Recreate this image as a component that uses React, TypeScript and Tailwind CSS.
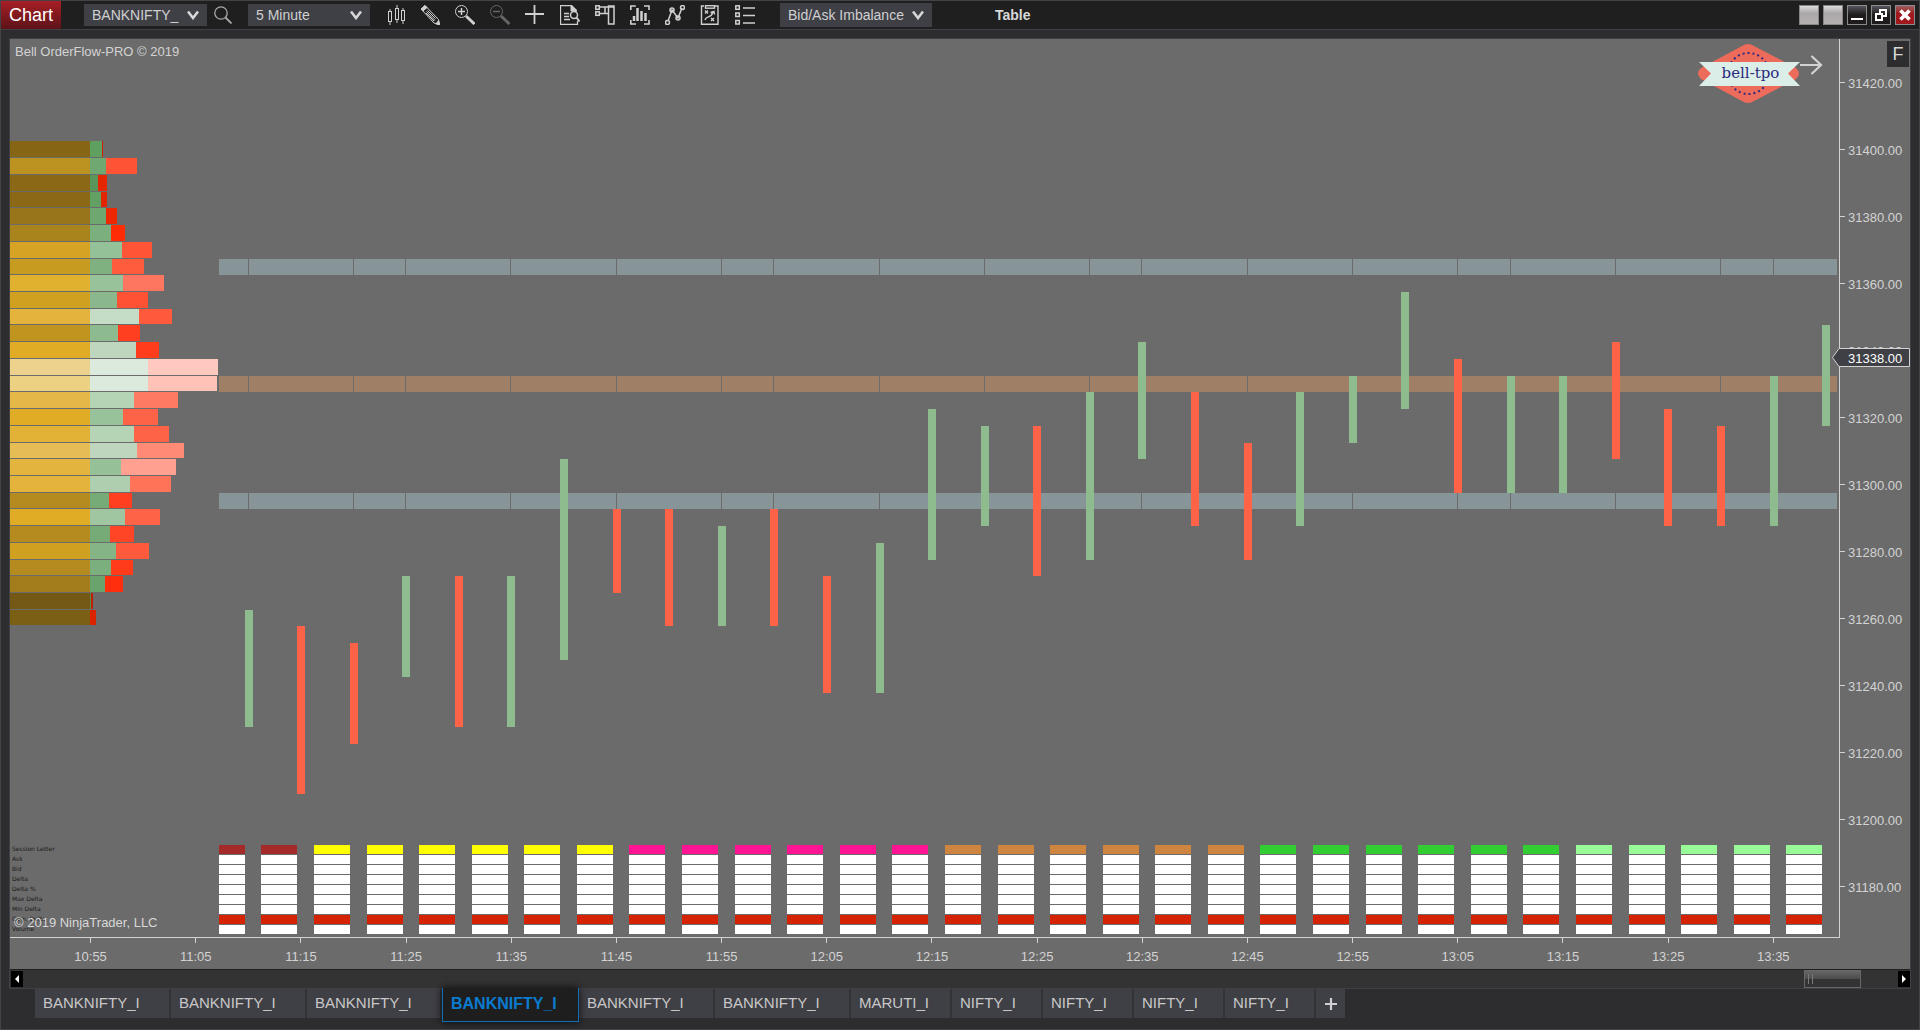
import type { ReactNode } from "react";

/* ---------- data ---------- */

// Volume profile: [volume colour, bid colour, bid end x, ask colour, ask end x]
const PROFILE: [string, string, number, string, number][] = [
  ["#866514", "#5fa061", 102, "#d51f00", 103],
  ["#bc9221", "#6fa870", 106, "#ff5336", 137],
  ["#8a6816", "#5a955c", 98, "#e62600", 107],
  ["#8a6816", "#62a163", 101, "#e22400", 107],
  ["#98751a", "#6ea770", 106, "#ee2800", 117],
  ["#a9831c", "#7bb07e", 111, "#ff2c06", 125],
  ["#d6a324", "#95c199", 122, "#ff5536", 152],
  ["#c79a20", "#7eb17f", 112, "#ff5c3e", 144],
  ["#e0b02f", "#98c299", 123, "#ff7660", 164],
  ["#d0a020", "#8ab88c", 117, "#ff5234", 148],
  ["#e3b33b", "#c5dcc6", 139, "#ff5a3c", 172],
  ["#c1931f", "#8dbb8f", 118, "#ff3f20", 140],
  ["#e0ac25", "#bed6be", 136, "#ff3d1c", 159],
  ["#ecd28c", "#dceadd", 148, "#ffc9c0", 218],
  ["#ecd182", "#dceadd", 148, "#ffc2b6", 217],
  ["#e4b748", "#b5d4b6", 134, "#ff7a63", 178],
  ["#e0ac25", "#98c299", 123, "#ff6347", 158],
  ["#e2b237", "#b5d4b6", 134, "#ff6347", 169],
  ["#e5bd54", "#bed6be", 137, "#ff8a75", 184],
  ["#e3b53f", "#96c098", 121, "#ffa090", 176],
  ["#e3b33b", "#aecfaf", 130, "#ff7358", 171],
  ["#b58b20", "#76aa77", 109, "#ff3f20", 132],
  ["#e0ac25", "#9fc6a0", 125, "#ff6347", 160],
  ["#b58b20", "#76aa77", 110, "#ff4526", 134],
  ["#d0a020", "#85b587", 116, "#ff5a3c", 149],
  ["#b58b20", "#7bb07e", 111, "#ff3b1a", 133],
  ["#a37c1b", "#6aa36b", 105, "#ff2e0c", 123],
  ["#735915", "#4f8d51", 91, "#c41e00", 93],
  ["#7a5f15", "#4f8d51", 90, "#dc2300", 96],
];

// Five-minute bars: [first price level, level after the last, rising]
const BARS: [number, number, boolean][] = [
  [28, 35, true], [29, 39, false], [30, 36, false], [26, 32, true], [26, 35, false],
  [26, 35, true], [19, 31, true], [22, 27, false], [22, 29, false], [23, 29, true],
  [22, 29, false], [26, 33, false], [24, 33, true], [16, 25, true], [17, 23, true],
  [17, 26, false], [15, 25, true], [12, 19, true], [15, 23, false], [18, 25, false],
  [15, 23, true], [14, 18, true], [9, 16, true], [13, 21, false], [14, 21, true],
  [14, 21, true], [12, 19, false], [16, 23, false], [17, 23, false], [14, 23, true],
  [11, 17, true],
];

const BANDS = [
  { level: 7, color: "#879599" },
  { level: 14, color: "#9f8066" },
  { level: 21, color: "#879599" },
];
const BAND_BREAKS = [0, 2, 3, 5, 7, 9, 10, 12, 14, 16, 17, 19, 21, 23, 24, 26, 28, 29];

const SESSION_LABELS = [
  "Session Letter", "Ask", "Bid", "Delta", "Delta %", "Max Delta", "Min Delta", "Cum. Delta", "Volume",
];

const PRICES = Array.from({ length: 13 }, (_, i) => (31420 - i * 20).toFixed(2));
const TIMES = Array.from({ length: 17 }, (_, i) => {
  const m = 655 + i * 10;
  return `${Math.floor(m / 60)}:${String(m % 60).padStart(2, "0")}`;
});

const TABS: [string, string][] = [
  ["BANKNIFTY_I", "w-[136px]"],
  ["BANKNIFTY_I", "w-[136px]"],
  ["BANKNIFTY_I", "w-[135px]"],
  ["BANKNIFTY_I", "w-[137px]"],
  ["BANKNIFTY_I", "w-[136px]"],
  ["BANKNIFTY_I", "w-[136px]"],
  ["MARUTI_I", "w-[101px]"],
  ["NIFTY_I", "w-[91px]"],
  ["NIFTY_I", "w-[91px]"],
  ["NIFTY_I", "w-[91px]"],
  ["NIFTY_I", "w-[91px]"],
];
const ACTIVE_TAB = 3;

/* ---------- chart drawing ---------- */

const levelY = (k: number) => Math.round(141.45 + 16.725 * k);
const barX = (i: number) => Math.round(244.5 + 52.588 * i);
const cellX = (i: number) => Math.round(208.74 + 52.587 * i);

function sessionColor(i: number) {
  if (i < 2) return "#a52a2a";
  if (i < 8) return "#ffff00";
  if (i < 14) return "#ff1493";
  if (i < 20) return "#cd853f";
  if (i < 26) return "#32cd32";
  return "#98fb98";
}

function Plot() {
  return (
    <svg
      className="absolute inset-0 h-full w-full"
      viewBox="10 39 1829 898"
      preserveAspectRatio="none"
      shapeRendering="crispEdges"
      role="img"
      aria-label="Order flow chart"
    >
      {PROFILE.map(([vol, bid, bidEnd, ask, askEnd], k) => {
        const y = levelY(k);
        const h = levelY(k + 1) - y - 1;
        return (
          <g key={k}>
            <rect x={10} y={y} width={80} height={h} fill={vol} />
            <rect x={90} y={y} width={bidEnd - 90} height={h} fill={bid} />
            <rect x={bidEnd} y={y} width={askEnd - bidEnd} height={h} fill={ask} />
          </g>
        );
      })}
      {BANDS.map(({ level, color }) => (
        <g key={level}>
          <rect x={219} y={levelY(level)} width={1618} height={16} fill={color} />
          {BAND_BREAKS.map((i) => (
            <rect key={i} x={barX(i) + 3} y={levelY(level)} width={1} height={16} fill="#6b6b6b" />
          ))}
        </g>
      ))}
      {BARS.map(([from, to, up], i) => (
        <rect
          key={i}
          x={barX(i)}
          y={levelY(from)}
          width={8}
          height={levelY(to) - levelY(from)}
          fill={up ? "#8fbc8f" : "#ff6347"}
        />
      ))}
      {BARS.map((_, i) => {
        const x = Math.max(219, cellX(i));
        const w = cellX(i) + 36 - x;
        return SESSION_LABELS.map((label, r) => (
          <rect
            key={`${i}-${label}`}
            x={x}
            y={845 + r * 10}
            width={w}
            height={9}
            fill={r === 0 ? sessionColor(i) : r === 7 ? "#d42203" : "#ffffff"}
          />
        ));
      })}
    </svg>
  );
}

function Logo() {
  return (
    <svg className="h-[64px] w-[130px]" viewBox="1695 41 130 64" role="img" aria-label="bell-tpo">
      <path
        d="M1742 46 Q1748 42 1754 46 L1796 68 Q1802 73.500 1796 79 L1754 101 Q1748 105 1742 101 L1701 79 Q1695 73.500 1701 68 Z"
        fill="#ed6b5a"
      />
      <circle cx="1748.500" cy="73.500" r="20.500" fill="none" stroke="#2b2a80" strokeWidth="2" strokeDasharray="2 3" />
      <path d="M1699 62 H1800 L1788 73.500 L1800 86 H1699 L1711 73.500 Z" fill="#dceee8" />
      <text x="1750.500" y="78" textAnchor="middle" fontSize="15" fill="#2b2a80" fontFamily="'DejaVu Serif', serif">
        bell-tpo
      </text>
      <path d="M1800 65 H1821 M1811.500 56 L1821 65 L1811.500 74" fill="none" stroke="#d3d3d3" strokeWidth="2.200" />
    </svg>
  );
}

/* ---------- toolbar ---------- */

const TOOLS: { name: string; dim?: boolean; art: ReactNode }[] = [
  {
    name: "Chart style",
    art: (
      <g>
        <rect x="3.500" y="6.500" width="3" height="10" />
        <path d="M5 4v2M5 17v3" />
        <rect x="10.500" y="3.500" width="3" height="11" />
        <path d="M12 0v3M12 15v3" />
        <rect x="16.500" y="5.500" width="3" height="10" />
        <path d="M18 3v2M18 16v3" />
      </g>
    ),
  },
  {
    name: "Drawing tools",
    art: (
      <g>
        <path d="M1 4l4-3.500L18.500 14.500l1 5-5.500-1.500Z" />
        <path d="M3 6l3.500-3.500M6 8l8 8M7.500 5.500l8 8M6.500 6.500l8.500 9" />
        <path d="M16 19l3.500.500-1-4Z" fill="currentColor" />
        <path d="M1 4l4-3.500 2 2L3 6Z" fill="currentColor" />
      </g>
    ),
  },
  {
    name: "Zoom in",
    art: (
      <g>
        <circle cx="6.500" cy="6.500" r="6" />
        <path d="M3 6.500h7M6.500 3v7" strokeWidth="1.500" />
        <path d="M11 11l8.500 8" strokeWidth="3" />
      </g>
    ),
  },
  {
    name: "Zoom out",
    dim: true,
    art: (
      <g>
        <circle cx="6.500" cy="6.500" r="6" />
        <path d="M3 6.500h7" strokeWidth="1.500" />
        <path d="M11 11l8.500 8" strokeWidth="3" />
      </g>
    ),
  },
  { name: "Crosshair", art: <path d="M0 9h19M9.500 0v19" strokeWidth="1.800" /> },
  {
    name: "Data box",
    art: (
      <g>
        <path d="M17.500 16v3.500h-17V.5h11l5 5" strokeWidth="1.300" />
        <path d="M11 0v6h6Z" fill="currentColor" />
        <path d="M4 8.500h5M4 11.500h5M4 14.500h6" strokeWidth="1.500" />
        <circle cx="14" cy="10" r="3.500" strokeWidth="1.500" />
        <path d="M16.500 12.500l3 4" strokeWidth="2" />
      </g>
    ),
  },
  {
    name: "Chart trader",
    art: (
      <g strokeWidth="1.500">
        <rect x=".8" y=".8" width="3.500" height="3.500" />
        <rect x=".8" y="6.800" width="3.500" height="3.500" />
        <path d="M5 2h14M5 8.500h8M10 2v6" />
        <rect x="13.500" y="1" width="5.500" height="18" />
      </g>
    ),
  },
  {
    name: "Data series",
    art: (
      <g strokeWidth="1.600">
        <path d="M.8 5V1h5M14 1h5v4M19 15v4h-5M6 19H.8v-4" />
        <path d="M4 16v-5M7.500 16V3M11.500 16V6M15.500 16V8" strokeWidth="2.500" />
      </g>
    ),
  },
  {
    name: "Indicators",
    art: (
      <g strokeWidth="1.500">
        <path d="M3 16L7 5l6 8 4-10" />
        <circle cx="2.500" cy="17.500" r="2" />
        <circle cx="7" cy="5" r="2" />
        <circle cx="13" cy="13" r="2" />
        <circle cx="17.500" cy="2.500" r="2" />
      </g>
    ),
  },
  {
    name: "Strategies",
    art: (
      <g strokeWidth="1.400">
        <path d="M4 1H1.500v18.300h16.500V1h-3" />
        <rect x="5.500" y=".7" width="9" height="2.500" />
        <path d="M5 5.500l3 3M8 5.500l-3 3M11 13l3 3M14 13l-3 3M5 15c1-5 6-1 8-8M10.500 7.500L14 6.500l.5 3" />
      </g>
    ),
  },
  {
    name: "Properties",
    art: (
      <g strokeWidth="1.500">
        <rect x=".8" y=".8" width="3.500" height="3.500" />
        <rect x=".8" y="8" width="3.500" height="3.500" />
        <rect x=".8" y="15.500" width="3.500" height="3.500" />
        <path d="M8 3h12M8 10.500h12M8 18h12" />
      </g>
    ),
  },
];

function Picker({ label, value, size }: { label: string; value: string; size: string }) {
  return (
    <label className={`relative flex items-center bg-[#3f3f46] ${size}`}>
      <span className="sr-only">{label}</span>
      <select
        className="h-full w-full appearance-none bg-transparent px-2 text-[14px] leading-5 text-[#d0d0d0] outline-none"
        defaultValue={value}
      >
        <option>{value}</option>
      </select>
      <svg className="pointer-events-none absolute right-2 h-[10px] w-[12px]" viewBox="0 0 12 10" fill="none">
        <path d="M1 1.500L6 8l5-6.500" stroke="#d8d8d8" strokeWidth="2.600" />
      </svg>
    </label>
  );
}

function Toolbar() {
  return (
    <header className="flex h-[29px] items-center border-b border-[#3f3f46] bg-[#1f1f1f]">
      <h1 className="flex h-full w-[60px] items-center justify-center bg-linear-to-b from-[#a81e25] to-[#5c1318] text-[18px] text-white">
        Chart
      </h1>
      <div className="ml-[23px] flex items-center">
        <Picker label="Instrument" value="BANKNIFTY_" size="h-[22px] w-[123px]" />
        <button aria-label="Search instrument" className="ml-[7px] h-[18px] w-[18px] text-[#a8a8a8]">
          <svg viewBox="0 0 18 18" fill="none" stroke="currentColor">
            <circle cx="7" cy="7" r="6.200" strokeWidth="1.300" />
            <path d="M11.500 11.500l6 6" strokeWidth="1.800" />
          </svg>
        </button>
        <div className="ml-4 flex">
          <Picker label="Interval" value="5 Minute" size="h-[22px] w-[122px]" />
        </div>
      </div>
      <div className="ml-[15px] flex gap-[15px] pb-px">
        {TOOLS.map((t) => (
          <button
            key={t.name}
            aria-label={t.name}
            className={t.dim ? "h-5 w-5 text-[#666666]" : "h-5 w-5 text-[#d0d0d0]"}
          >
            <svg viewBox="0 0 20 20" fill="none" stroke="currentColor">
              {t.art}
            </svg>
          </button>
        ))}
      </div>
      <div className="ml-[25px] flex">
        <Picker label="Bar type" value="Bid/Ask Imbalance" size="h-6 w-[152px]" />
      </div>
      <button className="ml-[63px] text-[14px] font-bold text-[#d8d8d8]">Table</button>
      <div className="mr-1 ml-auto flex gap-1 text-white">
        <button aria-label="Pin window" className="h-5 w-5 border border-[#8a8688] bg-linear-to-b from-[#dcdadb] from-0% via-[#aca8aa] via-40% to-[#b4b0b2]" />
        <button aria-label="Link window" className="h-5 w-5 border border-[#8a8688] bg-linear-to-b from-[#dcdadb] from-0% via-[#aca8aa] via-40% to-[#b4b0b2]" />
        <button aria-label="Minimize" className="h-5 w-5 border border-[#8c8c8c] bg-linear-to-b from-[#55555c] to-[#1f1b1c] to-50%">
          <svg viewBox="0 0 18 18">
            <path d="M3 13h12" stroke="white" strokeWidth="2" />
          </svg>
        </button>
        <button aria-label="Restore" className="h-5 w-5 border border-[#8c8c8c] bg-linear-to-b from-[#55555c] to-[#1f1b1c] to-50%">
          <svg viewBox="0 0 18 18" fill="none" stroke="white" strokeWidth="2">
            <path d="M8 7V4h6v6h-3" />
            <rect x="4" y="8" width="6" height="6" />
          </svg>
        </button>
        <button aria-label="Close" className="h-5 w-5 border border-[#8c8c8c] bg-linear-to-b from-[#9a5a5e] to-[#a0181e] to-40%">
          <svg viewBox="0 0 18 18">
            <path d="M4.500 4.500l9 9M13.500 4.500l-9 9" stroke="white" strokeWidth="3.600" />
          </svg>
        </button>
      </div>
    </header>
  );
}

/* ---------- axes and panels ---------- */

function PriceAxis() {
  return (
    <aside className="relative w-[71px] shrink-0 pb-[31px] text-[13px] leading-4 text-[#d3d3d3]">
      <div className="flex h-full flex-col border-l border-[#d3d3d3] pt-[10px] pb-[18px]">
        {PRICES.map((p) => (
          <div key={p} className="flex flex-1 items-center gap-[3px]">
            <span className="h-px w-[5px] bg-[#d3d3d3]" />
            <span className="pt-[3px]">{p}</span>
          </div>
        ))}
      </div>
      <button className="absolute top-[2px] right-px h-[26px] w-[22px] bg-[#2d2d30] text-[18px] text-[#d8d8d8]">F</button>
      <div className="absolute top-[309px] -left-[7px] h-[19px] w-[78px]">
        <svg className="absolute inset-0" viewBox="0 0 78 19" fill="#3f3f46" stroke="#d3d3d3">
          <path d="M.5 9.500L7 .5H77.500V18.500H7Z" />
        </svg>
        <span className="relative block pt-[3px] pl-4 text-white">31338.00</span>
      </div>
    </aside>
  );
}

function TimeAxis() {
  return (
    <div className="flex h-[31px] pr-[13px] pl-7 text-[13px] leading-4 text-[#d3d3d3]">
      {TIMES.map((t) => (
        <div key={t} className="flex flex-1 flex-col items-center gap-[6px]">
          <span className="h-[5px] w-px bg-[#d3d3d3]" />
          <span>{t}</span>
        </div>
      ))}
    </div>
  );
}

function ScrollBar() {
  return (
    <div className="flex h-[19px] items-stretch border-t border-[#1f1f1f] bg-[#333333]">
      <button aria-label="Scroll left" className="my-px ml-px flex w-3 items-center justify-center bg-black">
        <svg className="h-2 w-1" viewBox="0 0 4 8"><path d="M4 0v8L0 4Z" fill="white" /></svg>
      </button>
      <div className="flex flex-1 justify-end">
        <div className="mr-[37px] flex w-[57px] items-center gap-[3px] border border-[#686868] bg-linear-to-b from-[#666666] from-0% via-[#4c4c4c] via-50% to-[#333333] to-50% pl-[3px]">
          <span className="h-[10px] w-px bg-[#7a7a7a]" />
          <span className="h-[10px] w-px bg-[#7a7a7a]" />
        </div>
      </div>
      <button aria-label="Scroll right" className="my-px flex w-3 items-center justify-center bg-black">
        <svg className="h-2 w-1" viewBox="0 0 4 8"><path d="M0 0v8L4 4Z" fill="white" /></svg>
      </button>
    </div>
  );
}

function Tabs() {
  return (
    <nav className="flex h-10 items-start pl-[34px] text-[#c8c8c8]">
      {TABS.map(([name, width], i) =>
        i === ACTIVE_TAB ? (
          <button
            key={i}
            className={`relative z-10 -mt-px h-[34px] border border-t-0 border-[#0e6eb8] bg-[#1e1e1e] pb-[2px] pl-2 text-left text-[16px] font-bold text-[#0b7bd0] shadow-[0_0_8px_rgba(0,0,0,0.8)] ${width}`}
          >
            {name}
          </button>
        ) : (
          <button key={i} className={`h-[29px] border-r-2 border-[#333337] bg-[#3f3f46] pl-2 text-left text-[15px] ${width}`}>
            {name}
          </button>
        ),
      )}
      <button aria-label="Add tab" className="flex h-[29px] w-[29px] items-center justify-center bg-[#3f3f46]">
        <svg className="h-3 w-3" viewBox="0 0 12 12"><path d="M0 6h12M6 0v12" stroke="#d0d0d0" strokeWidth="2.200" /></svg>
      </button>
    </nav>
  );
}

export default function App() {
  return (
    <div className="flex min-h-screen flex-col border border-[#434346] bg-[#2d2d30] font-['Liberation_Sans',Arial,sans-serif]">
      <Toolbar />
      <main className="mx-2 mt-2 flex flex-1 flex-col border border-[#3f3f46]">
        <div className="flex flex-1 bg-[#6b6b6b]">
          <div className="flex min-w-0 flex-1 flex-col">
            <div className="relative flex flex-1 flex-col justify-between border-b border-[#d3d3d3]">
              <Plot />
              <div className="relative flex items-start justify-between pt-[2px] pr-[14px] pl-[5px]">
                <p className="pt-[3px] text-[13px] leading-4 text-[#d3d3d3]">Bell OrderFlow-PRO © 2019</p>
                <Logo />
              </div>
              <div className="relative pb-[3px] pl-[2px]">
                <ul className="font-['DejaVu_Sans',sans-serif] text-[6px] leading-[10px] text-[#1a1a1a]">
                  {SESSION_LABELS.map((l) => (
                    <li key={l}>{l}</li>
                  ))}
                </ul>
                <p className="absolute bottom-[6px] left-1 text-[13px] leading-4 text-[#d8d8d8]">© 2019 NinjaTrader, LLC</p>
              </div>
            </div>
            <TimeAxis />
          </div>
          <PriceAxis />
        </div>
        <ScrollBar />
      </main>
      <Tabs />
    </div>
  );
}
